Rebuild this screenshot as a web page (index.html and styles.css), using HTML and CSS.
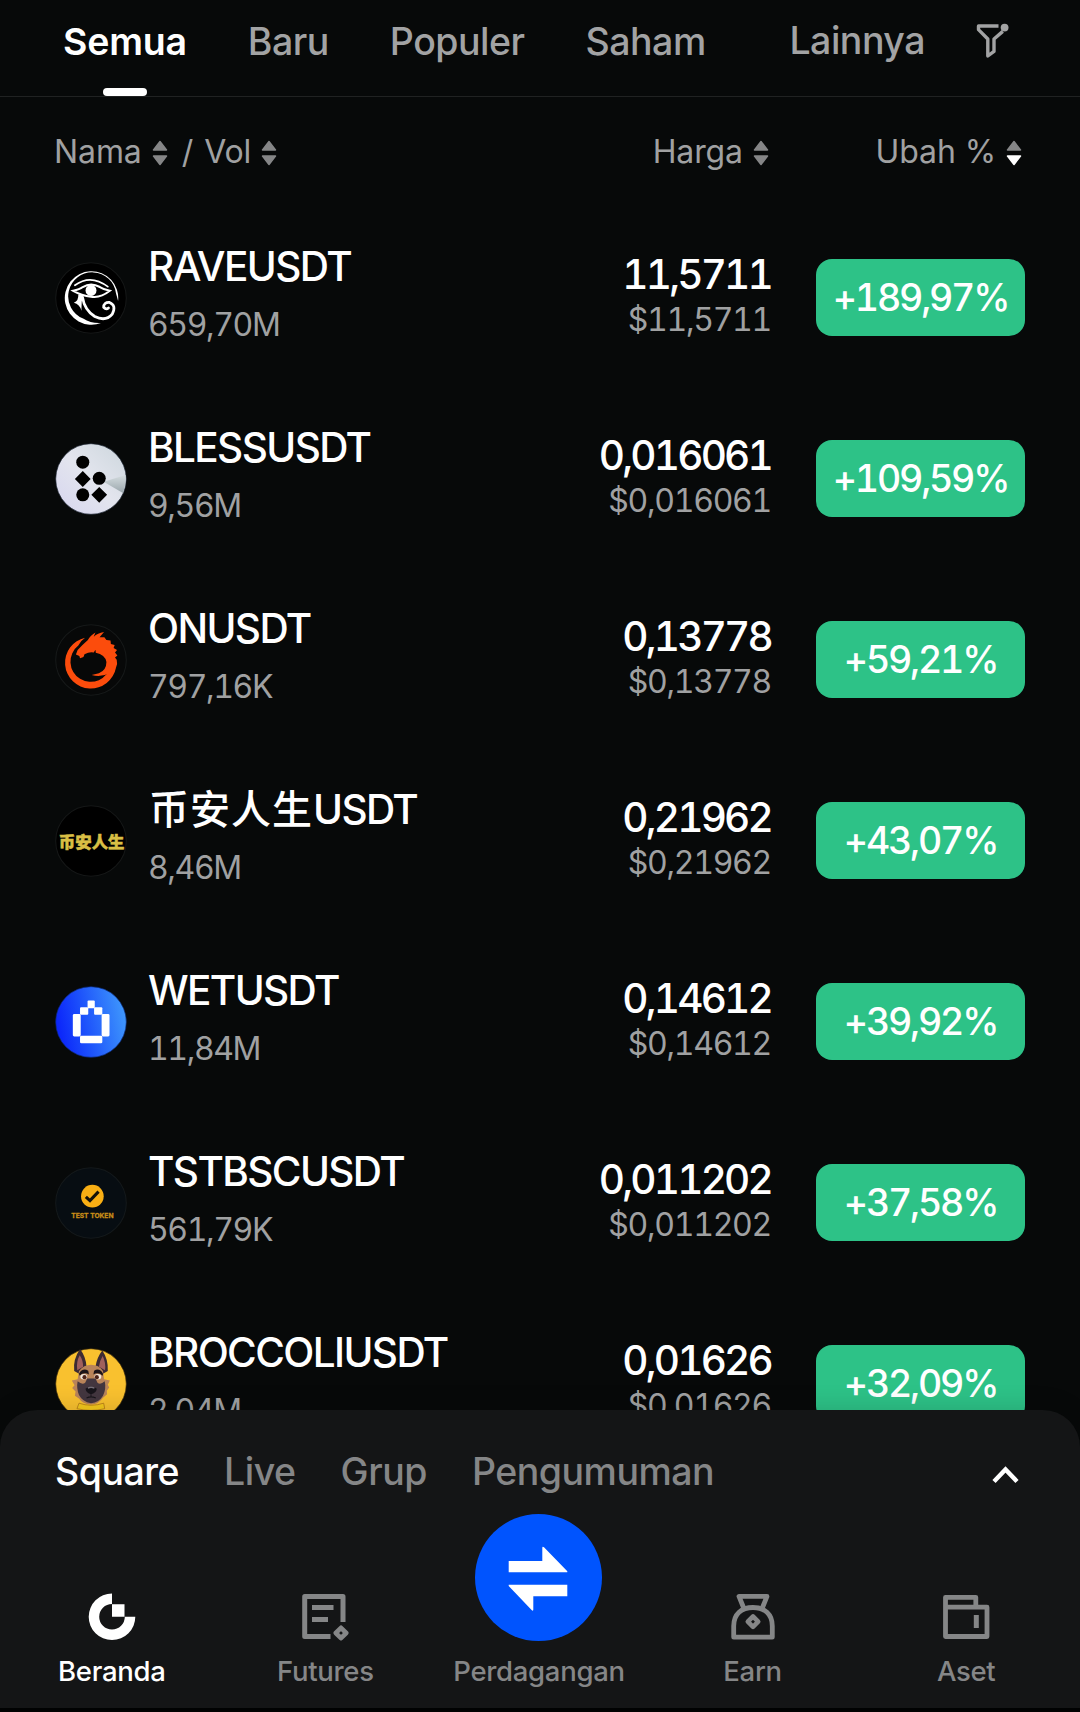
FILE: index.html
```html
<!DOCTYPE html>
<html lang="id">
<head>
  <meta charset="UTF-8">
  <title>Pasar</title>
  <link rel="stylesheet" href="styles.css">
</head>
<body>
  <div class="app">
    <div class="tabs">
      <a class="tab active">Semua</a>
      <a class="tab">Baru</a>
      <a class="tab">Populer</a>
      <a class="tab">Saham</a>
      <div class="more">
        <a class="tab">Lainnya</a>
        <svg class="filter" width="34" height="36" viewBox="0 0 34 36">
          <path d="M22.5 3H2.5v3.6L11.8 16v17l6.2-4.6V16l8.8-7.6" fill="none" stroke="#a2a3a4" stroke-width="3.4" stroke-linejoin="round"/>
          <circle cx="28.6" cy="4.6" r="3.9" fill="#a2a3a4"/>
        </svg>
      </div>
    </div>

    <div class="head">
      <div class="head-name">
        <span>Nama</span>
        <svg class="sort" viewBox="0 0 16 26"><path class="up" d="M8 1.500 14.500 10H1.500z"/><path class="down" d="M8 24.500 1.500 16h13z"/></svg>
        <span class="slash">/</span>
        <span>Vol</span>
        <svg class="sort" viewBox="0 0 16 26"><path class="up" d="M8 1.500 14.500 10H1.500z"/><path class="down" d="M8 24.500 1.500 16h13z"/></svg>
      </div>
      <div class="head-price">
        <span>Harga</span>
        <svg class="sort" viewBox="0 0 16 26"><path class="up" d="M8 1.500 14.500 10H1.500z"/><path class="down" d="M8 24.500 1.500 16h13z"/></svg>
      </div>
      <div class="head-change">
        <span>Ubah %</span>
        <svg class="sort desc" viewBox="0 0 16 26"><path class="up" d="M8 1.500 14.500 10H1.500z"/><path class="down" d="M8 24.500 1.500 16h13z"/></svg>
      </div>
    </div>

    <div class="list">
      <div class="row">
        <svg class="coin" viewBox="18 20 210 210">
          <circle cx="123" cy="125" r="103" fill="#000" stroke="#151717" stroke-width="3"/>
          <path d="M202 134A78 78 0 1 0 152 198Q124 200 100 185A70 70 0 1 1 196 112Q199 122 202 134z" fill="#fff"/>
          <g fill="none" stroke="#fff" stroke-linecap="round">
            <path d="M76 88Q122 54 172 92" stroke-width="5"/>
            <path d="M71 104Q90 100 99 93Q123 79 149 93Q162 101 178 104Q150 126 123 121Q96 118 71 104z" stroke-width="6"/>
            <path d="M98 122Q104 160 134 179Q166 195 185 172Q198 146 177 138Q160 137 160 152Q167 160 174 154" stroke-width="8"/>
          </g>
          <circle cx="123" cy="103" r="16" fill="#fff"/>
          <path d="M86 115h14l-4 21-1 26q-5-19-22-23 14-5 13-24z" fill="#fff"/>
        </svg>
        <div class="pair"><div class="name">RAVEUSDT</div><div class="vol">659,70M</div></div>
        <div class="price"><div class="last">11,5711</div><div class="usd">$11,5711</div></div>
        <div class="badge">+189,97%</div>
      </div>

      <div class="row">
        <svg class="coin" viewBox="48 642 210 210">
          <defs>
            <linearGradient id="bless" x1="0" y1="1" x2="1" y2="0">
              <stop offset="0" stop-color="#d6d5ef"/><stop offset=".5" stop-color="#e3e5ee"/><stop offset="1" stop-color="#ccd6dc"/>
            </linearGradient>
            <linearGradient id="fold" x1="0" y1="0" x2="0" y2="1">
              <stop offset="0" stop-color="#d5dde0"/><stop offset="1" stop-color="#9aa6ac"/>
            </linearGradient>
          </defs>
          <circle cx="153" cy="747" r="103" fill="url(#bless)" stroke="#1b2330" stroke-width="2"/>
          <path d="M190 755 254 735Q255 765 246 788z" fill="url(#fold)"/>
          <g fill="#000">
            <circle cx="129" cy="698" r="19"/><circle cx="177" cy="745" r="19"/><circle cx="129" cy="793" r="19"/>
            <path d="M129 724 152 747 129 770 106 747zM177 770 200 793 177 816 154 793z"/>
          </g>
        </svg>
        <div class="pair"><div class="name">BLESSUSDT</div><div class="vol">9,56M</div></div>
        <div class="price"><div class="last">0,016061</div><div class="usd">$0,016061</div></div>
        <div class="badge">+109,59%</div>
      </div>

      <div class="row">
        <svg class="coin" viewBox="18 21 210 210">
          <circle cx="123" cy="126" r="103" fill="#070808" stroke="#161919" stroke-width="3"/>
          <!-- ring -->
          <path d="M106 61A75 75 0 1 0 196 148L180 142A59 59 0 1 1 86 84Q92 70 106 61z" fill="#fc4c0c"/>
          <!-- head and mane -->
          <path d="M161 44Q142 47 131 58L136 46Q120 55 114 68Q96 84 84 97L79 110 89 114 91 121 101 117 104 109Q119 101 131 104L136 96 137 105Q164 110 168 132Q168 156 146 165L125 170Q152 178 178 164L196 148Q201 136 198 125L193 119 200 113 193 104 199 97 189 91 192 82 181 79 180 69 168 68 162 60 148 60z" fill="#fc4c0c"/>
        </svg>
        <div class="pair"><div class="name">ONUSDT</div><div class="vol">797,16K</div></div>
        <div class="price"><div class="last">0,13778</div><div class="usd">$0,13778</div></div>
        <div class="badge">+59,21%</div>
      </div>

      <div class="row">
        <svg class="coin" viewBox="48 618 210 210">
          <circle cx="153" cy="723" r="103" fill="#000" stroke="#151717" stroke-width="3"/>
          <text class="coin-cjk" x="155" y="744" text-anchor="middle">币安人生</text>
        </svg>
        <div class="pair"><div class="name"><span class="cjk">币安人生</span>USDT</div><div class="vol">8,46M</div></div>
        <div class="price"><div class="last">0,21962</div><div class="usd">$0,21962</div></div>
        <div class="badge">+43,07%</div>
      </div>

      <div class="row">
        <svg class="coin" viewBox="48 81 210 210">
          <defs>
            <linearGradient id="wet" x1="0" y1=".6" x2="1" y2=".4">
              <stop offset="0" stop-color="#0a22fa"/><stop offset=".4" stop-color="#1c50fb"/><stop offset="1" stop-color="#3f98fc"/>
            </linearGradient>
          </defs>
          <circle cx="153" cy="186" r="103" fill="url(#wet)" stroke="#0c2a78" stroke-width="2"/>
          <g fill="#fff">
            <rect x="143" y="123" width="21" height="23" rx="3"/>
            <rect x="121" y="143" width="24" height="22" rx="3"/>
            <rect x="162" y="143" width="24" height="22" rx="3"/>
            <rect x="100" y="163" width="23" height="65" rx="4"/>
            <rect x="184" y="163" width="23" height="65" rx="4"/>
            <rect x="121" y="226" width="65" height="22" rx="4"/>
          </g>
        </svg>
        <div class="pair"><div class="name">WETUSDT</div><div class="vol">11,84M</div></div>
        <div class="price"><div class="last">0,14612</div><div class="usd">$0,14612</div></div>
        <div class="badge">+39,92%</div>
      </div>

      <div class="row">
        <svg class="coin" viewBox="48 624 210 210">
          <circle cx="153" cy="729" r="103" fill="#070d12" stroke="#14191b" stroke-width="3"/>
          <circle cx="157" cy="709" r="33" fill="#f9af14"/>
          <path d="M138 711 150 722 175 696" fill="none" stroke="#14110a" stroke-width="9"/>
          <text class="coin-test" x="157" y="774" text-anchor="middle">TEST TOKEN</text>
        </svg>
        <div class="pair"><div class="name">TSTBSCUSDT</div><div class="vol">561,79K</div></div>
        <div class="price"><div class="last">0,011202</div><div class="usd">$0,011202</div></div>
        <div class="badge">+37,58%</div>
      </div>

      <div class="row">
        <svg class="coin" viewBox="18 21 210 210">
          <circle cx="123" cy="126" r="103" fill="#f9c12f" stroke="#3a2a0c" stroke-width="2"/>
          <!-- ears -->
          <path d="M91 24Q70 54 74 88L92 98 110 76Q108 46 91 24zM156 28Q174 54 172 88L154 98 136 76Q140 48 156 28z" fill="#3d2b33"/>
          <path d="M90 42Q79 62 83 86L100 76Q100 56 90 42zM157 44Q167 64 164 86L146 76Q148 58 157 44z" fill="#a0605c"/>
          <!-- head -->
          <path d="M88 88Q102 70 123 70Q146 70 158 88L161 112 178 116 172 128 176 136 169 146 170 156 158 166Q146 184 123 186Q98 184 88 168L76 160 78 148 68 138 75 130 67 116 84 112z" fill="#b98459"/>
          <path d="M84 118Q98 130 106 122L112 110 136 110 142 122Q150 130 163 118Q168 140 158 160Q146 180 123 182Q98 178 88 158Q80 138 84 118z" fill="#43363f"/>
          <path d="M88 96Q98 78 115 87L117 98Q102 90 90 102zM158 96Q148 78 132 87L130 98Q144 90 157 102z" fill="#1c1418"/>
          <ellipse cx="102" cy="105" rx="10" ry="8" fill="#f1e6dc"/><ellipse cx="143" cy="105" rx="10" ry="8" fill="#f1e6dc"/>
          <circle cx="104" cy="106" r="6" fill="#4d2318"/><circle cx="140" cy="106" r="6" fill="#4d2318"/>
          <path d="M107 140Q123 126 140 140 138 153 123 156 109 153 107 140z" fill="#18151b"/>
          <path d="M114 138Q123 133 133 138" fill="none" stroke="#777079" stroke-width="4"/>
          <path d="M123 156v8m-13 3q13-7 27 0" fill="none" stroke="#18151b" stroke-width="3"/>
          <path d="M88 182Q123 194 160 182L163 198Q123 208 82 198z" fill="#f6ca1c" stroke="#a86c16" stroke-width="2"/>
        </svg>
        <div class="pair"><div class="name">BROCCOLIUSDT</div><div class="vol">2,04M</div></div>
        <div class="price"><div class="last">0,01626</div><div class="usd">$0,01626</div></div>
        <div class="badge">+32,09%</div>
      </div>
    </div>

    <div class="sheet">
      <div class="feed">
        <a class="feed-tab active">Square</a>
        <a class="feed-tab">Live</a>
        <a class="feed-tab">Grup</a>
        <a class="feed-tab">Pengumuman</a>
        <svg class="chevron" width="27" height="18" viewBox="0 0 27 18"><path d="M2 15.500 13.500 3.500 25 15.500" fill="none" stroke="#fff" stroke-width="4.400"/></svg>
      </div>
      <div class="nav">
        <a class="nav-item active">
          <svg width="48" height="48" viewBox="0 0 48 48">
            <path d="M24 .5A23.300 23.300 0 1 0 47.300 23.800H36.800A12.800 12.800 0 1 1 24 11zM24 11.200h12.500v12.500H24z" fill="#fff"/>
          </svg>
          <span>Beranda</span>
        </a>
        <a class="nav-item">
          <svg width="48" height="48" viewBox="0 0 48 48">
            <path d="M29.500 43.500H3.700V3.500H42V29" fill="none" stroke="#858687" stroke-width="5" stroke-linejoin="round"/>
            <path d="M11 14.500h21.500M11 26.500h16" stroke="#858687" stroke-width="5"/>
            <path d="M40 34.800 45.200 40 40 45.200 34.800 40z" fill="none" stroke="#858687" stroke-width="4.600" stroke-linejoin="round"/>
          </svg>
          <span>Futures</span>
        </a>
        <a class="nav-item">
          <svg width="127" height="127" viewBox="0 0 127 127">
            <circle cx="63.500" cy="63.500" r="63.500" fill="#0054fe"/>
            <path d="M33.700 47H67.300V34Q67.300 31.700 69 33.300L92.300 57.300V58.300H33.700zM92.300 70.700V82.300H58.300V95.500Q58.300 97.500 56.600 96L33.700 72V70.700z" fill="#fff"/>
          </svg>
          <span>Perdagangan</span>
        </a>
        <a class="nav-item">
          <svg width="48" height="48" viewBox="0 0 48 48">
            <path d="M4.700 44.200V33C4.700 21 12.500 14.500 24 14.500S43.300 21 43.300 33V44.200z" fill="none" stroke="#858687" stroke-width="4.800" stroke-linejoin="round"/>
            <path d="M14.500 14.500 10 3.400H38L33.500 14.500" fill="none" stroke="#858687" stroke-width="4.800" stroke-linejoin="round"/>
            <path d="M24 23.500 29.200 28.700 24 33.900 18.800 28.700z" fill="none" stroke="#858687" stroke-width="4.600" stroke-linejoin="round"/>
          </svg>
          <span>Earn</span>
        </a>
        <a class="nav-item">
          <svg width="48" height="48" viewBox="0 0 48 48">
            <path d="M3.500 14.200H45V43.500H3.500zM3.500 14.200V4.300H33.800V14.200" fill="none" stroke="#858687" stroke-width="4.800" stroke-linejoin="round"/>
            <path d="M34.300 22v13" stroke="#858687" stroke-width="5"/>
          </svg>
          <span>Aset</span>
        </a>
      </div>
    </div>
  </div>
</body>
</html>
```
FILE: styles.css
```css
html,body {
  margin: 0;
  padding: 0;
  background: #020303;
}
body {
  font-family: Inter, "Noto Sans CJK SC", sans-serif;
  color: #fff;
}
svg {
  display: block;
  flex: none;
}
.app {
  width: 1080px;
  height: 1712px;
  overflow: hidden;
}

/* category tabs */
.tabs {
  display: flex;
  gap: 61px;
  box-sizing: border-box;
  height: 97px;
  padding: 20px 0 0 63px;
  border-bottom: 1px solid #202222;
  background: #070909;
}
.tab {
  display: flex;
  flex-direction: column;
  justify-content: space-between;
  align-items: center;
  font-size: 37.5px;
  font-weight: 500;
  line-height: 44px;
  letter-spacing: -0.5px;
  color: #a2a3a4;
}
.tab.active {
  font-weight: 600;
  letter-spacing: -0.2px;
  color: #fff;
}
.tab.active::after {
  content: "";
  width: 44px;
  height: 8px;
  border-radius: 4px;
  background: #fff;
}
.more {
  display: flex;
  flex: 1;
  justify-content: flex-end;
  gap: 51px;
  margin-top: -1px;
  padding-right: 70px;
}
.filter {
  margin-top: 4px;
}

/* column titles */
.head {
  display: flex;
  box-sizing: border-box;
  height: 110px;
  padding: 36px 58px 0 54px;
  background: #070909;
  font-size: 32px;
  line-height: 38px;
  letter-spacing: -0.1px;
  color: #a0a1a2;
}
.head > div {
  display: flex;
}
.head-name {
  flex: 1;
}
.head-price {
  width: 180px;
  justify-content: flex-end;
}
.head-change {
  width: 253px;
  justify-content: flex-end;
}
.sort {
  width: 16px;
  height: 26px;
  margin: 7px 0 0 10px;
  fill: #858687;
  stroke: #858687;
  stroke-width: 1.5px;
  stroke-linejoin: round;
}
.sort.desc .down {
  fill: #fff;
  stroke: #fff;
}
.slash {
  margin: 0 11px 0 14px;
}

/* market rows */
.list {
  height: 1240px;
  overflow: hidden;
  background: #070909;
}
.row {
  display: flex;
  align-items: center;
  height: 181px;
  padding: 0 55px;
}
.coin {
  width: 72px;
  height: 72px;
}
.coin-cjk {
  font: 900 48px "Noto Sans CJK SC", sans-serif;
  fill: #d9bf45;
  stroke: #d9bf45;
  stroke-width: 1.5px;
}
.coin-test {
  font: 700 19.5px Inter, sans-serif;
  fill: #c98d18;
  stroke: #c98d18;
  stroke-width: 0.8px;
}
.pair {
  flex: 1;
  padding: 0 0 8px 21px;
}
.name {
  font-size: 40.5px;
  font-weight: 500;
  line-height: 48px;
  letter-spacing: -1.6px;
}
.cjk {
  margin-left: 1px;
  font-size: 40px;
  letter-spacing: 1px;
}
.vol,
.last,
.usd,
.badge {
  font-feature-settings: "tnum";
}
.vol {
  margin-top: 15px;
  font-size: 32px;
  line-height: 38px;
  letter-spacing: -1.4px;
  color: #a0a1a2;
}
.price {
  padding-bottom: 2px;
  text-align: right;
}
.last {
  font-size: 40.5px;
  font-weight: 500;
  line-height: 44px;
  letter-spacing: -2.8px;
}
.usd {
  margin-top: 3px;
  font-size: 32px;
  line-height: 40px;
  letter-spacing: -1.3px;
  color: #a0a1a2;
}
.badge {
  width: 209px;
  height: 77px;
  margin-left: 45px;
  border-radius: 16px;
  background: #2dc287;
  font-size: 37.5px;
  font-weight: 500;
  line-height: 77px;
  letter-spacing: -2.2px;
  text-align: center;
}

/* bottom sheet */
.sheet {
  position: relative;
  box-sizing: border-box;
  height: 298px;
  margin-top: -37px;
  padding-top: 40px;
  border-radius: 37px 37px 0 0;
  background: #141516;
  box-shadow: 0 -2px 24px rgba(0, 0, 0, 0.15);
}
.feed {
  display: flex;
  gap: 45px;
  padding: 0 61px 0 55px;
}
.feed-tab {
  font-size: 37.5px;
  font-weight: 500;
  line-height: 44px;
  letter-spacing: -0.5px;
  color: #858687;
}
.feed-tab.active {
  color: #fff;
}
.chevron {
  margin: 16px 0 0 auto;
}
.nav {
  display: flex;
  align-items: flex-end;
  margin-top: 20px;
  padding: 0 7px 0 5px;
}
.nav-item {
  display: flex;
  flex: 1;
  flex-direction: column;
  align-items: center;
  gap: 13px;
  font-size: 27.5px;
  font-weight: 500;
  line-height: 34px;
  letter-spacing: -0.3px;
  color: #858687;
}
.nav-item.active {
  color: #fff;
}
```
